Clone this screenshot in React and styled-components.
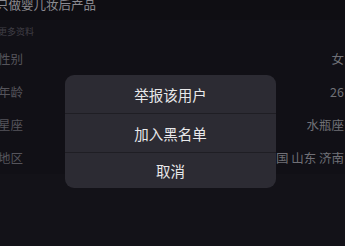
import React from "react";
import styled, { createGlobalStyle } from "styled-components";

const GlobalStyle = createGlobalStyle`
  html, body {
    margin: 0;
    padding: 0;
    background: #131218;
  }
  * { box-sizing: border-box; }
`;

const FONT = `"Noto Sans CJK SC", "Noto Sans", sans-serif`;

const Page = {
  Screen: styled.div`
    position: relative;
    width: 345px;
    height: 246px;
    overflow: hidden;
    background: #131218;
    font-family: ${FONT};
  `,
  Intro: styled.div`
    height: 20px;
    background: #0f0e13;
    overflow: hidden;
  `,
  IntroText: styled.p`
    margin: -3px 0 0 -4px;
    font-size: 12.5px;
    line-height: 16px;
    color: #8b8a90;
    white-space: nowrap;
  `,
  Card: styled.section`
    height: 154px;
    background: #111016;
  `,
  CardTitle: styled.h4`
    margin: 0 0 0 -2px;
    height: 22px;
    display: flex;
    align-items: center;
    font-size: 9px;
    font-weight: 400;
    color: #403f46;
  `,
  Row: styled.div`
    height: 33px;
    display: flex;
    align-items: center;
    justify-content: space-between;
    margin: 0 1px 0 -2px;
    font-size: 12.5px;
  `,
  Label: styled.span`
    color: #55545b;
  `,
  Value: styled.span`
    color: #707076;
    white-space: nowrap;
  `,
};

const Sheet = {
  Overlay: styled.div`
    position: absolute;
    inset: 0;
  `,
  Box: styled.div`
    position: absolute;
    left: 65px;
    top: 75px;
    width: 211px;
    background: #2c2b33;
    border-radius: 9px;
    overflow: hidden;
    display: flex;
    flex-direction: column;
  `,
  Item: styled.button`
    height: ${(p) => (p.$last ? 35 : 38)}px;
    border: 0;
    border-bottom: ${(p) => (p.$last ? "0" : "1px solid #1f1e24")};
    background: transparent;
    display: flex;
    align-items: center;
    justify-content: center;
    font-family: ${FONT};
    font-size: 14.5px;
    color: #e8e8ea;
    padding: 0;
    box-sizing: content-box;
  `,
};

const ROWS = [
  { label: "性别", value: "女" },
  { label: "年龄", value: "26" },
  { label: "星座", value: "水瓶座" },
  { label: "地区", value: "中国 山东 济南" },
];

const ACTIONS = ["举报该用户", "加入黑名单", "取消"];

export default function App() {
  return (
    <>
      <GlobalStyle />
      <Page.Screen>
        <Page.Intro>
          <Page.IntroText>只做婴儿妆后产品</Page.IntroText>
        </Page.Intro>
        <Page.Card>
          <Page.CardTitle>更多资料</Page.CardTitle>
          {ROWS.map((r) => (
            <Page.Row key={r.label}>
              <Page.Label>{r.label}</Page.Label>
              <Page.Value>{r.value}</Page.Value>
            </Page.Row>
          ))}
        </Page.Card>
        <Sheet.Overlay>
          <Sheet.Box>
            {ACTIONS.map((a, i) => (
              <Sheet.Item key={a} $last={i === ACTIONS.length - 1}>
                {a}
              </Sheet.Item>
            ))}
          </Sheet.Box>
        </Sheet.Overlay>
      </Page.Screen>
    </>
  );
}
